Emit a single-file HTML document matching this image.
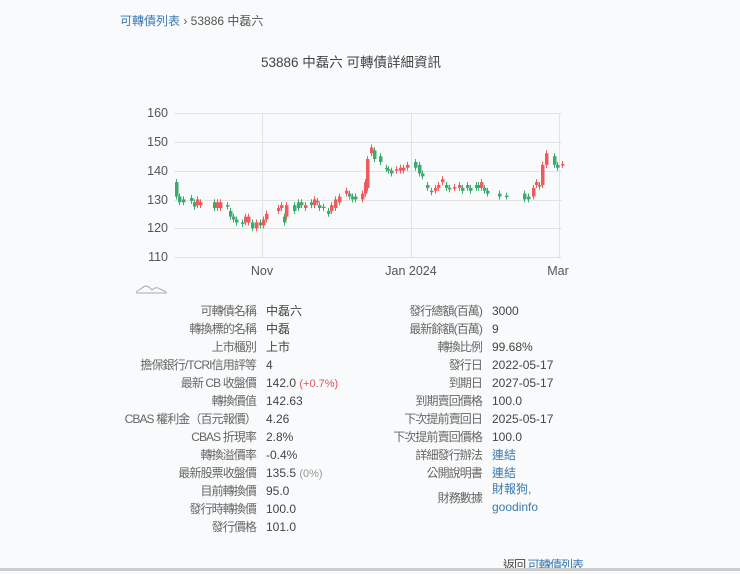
<!DOCTYPE html>
<html><head><meta charset="utf-8">
<style>
body{margin:0;width:740px;height:571px;background:#f9fafb;font-family:"Liberation Sans","Noto Sans CJK TC",sans-serif;color:#444;position:relative;overflow:hidden}
.a{color:#3a7ab0;text-decoration:none}
.bc{position:absolute;left:120px;top:12px;font-size:12px;color:#555}
.title{position:absolute;left:0;width:702px;text-align:center;top:51px;font-size:13.5px;color:#444}
.row{position:absolute;font-size:12px;height:18px;line-height:18px;white-space:nowrap}
.l{color:#666;text-align:right;letter-spacing:-0.9px}
.bar{position:absolute;left:0;right:0;bottom:0;height:3px;background:#ccc}
</style></head><body>
<div class="bc"><span class="a">可轉債列表</span> › 53886 中磊六</div>
<div class="title">53886 中磊六 可轉債詳細資訊</div>
<svg id="ch" width="740" height="300" style="position:absolute;left:0;top:0" font-family="Liberation Sans" font-size="12.5" fill="#555">
<g stroke="#e2e2e2" stroke-width="1">
<line x1="174" x2="562" y1="113.5" y2="113.5"/><line x1="174" x2="562" y1="142.5" y2="142.5"/>
<line x1="174" x2="562" y1="171.5" y2="171.5"/><line x1="174" x2="562" y1="200.5" y2="200.5"/>
<line x1="174" x2="562" y1="228.5" y2="228.5"/><line x1="174" x2="562" y1="257.5" y2="257.5"/>
<line x1="262.5" x2="262.5" y1="113" y2="258"/><line x1="411.5" x2="411.5" y1="113" y2="258"/><line x1="559.5" x2="559.5" y1="113" y2="258"/>
</g>
<text x="168" y="117" text-anchor="end">160</text><text x="168" y="146" text-anchor="end">150</text>
<text x="168" y="175" text-anchor="end">140</text><text x="168" y="204" text-anchor="end">130</text>
<text x="168" y="232" text-anchor="end">120</text><text x="168" y="261" text-anchor="end">110</text>
<text x="262" y="275" text-anchor="middle">Nov</text><text x="411" y="275" text-anchor="middle">Jan 2024</text><text x="558" y="275" text-anchor="middle">Mar</text>
<path d="M136 292 L142 288 Q146 284 150 288 L152 290 Q156 286 160 289 L166 292 M136 293 L167 293" stroke="#aaa" fill="none" stroke-width="1"/>
<g id="c"></g>
</svg>
<script>
var d=[[175,136,131,'g'],[178,131,129,'g'],[182,130,129,'g'],[190,130.5,129.5,'g'],[193,129,127.5,'g'],[196,128,130,'r'],[199,128,129,'r'],[213,129,127,'g'],[216,127,129,'r'],[219,127,129,'r'],[226,128,127.5,'g'],[229,126,124,'g'],[232,124,123,'g'],[235,123,122,'g'],[241,122,121.5,'g'],[244,122,124,'r'],[247,122,124,'r'],[251,122,120,'g'],[255,120,122,'r'],[259,122,121,'g'],[262,121,123,'r'],[265,123,125,'r'],[277,126,127,'r'],[280,127,128,'r'],[283,124,122,'g'],[285,124,128,'r'],[293,128,126,'g'],[297,129,127,'g'],[300,129,128,'g'],[304,127,128,'r'],[310,128,129,'g'],[313,128,130,'r'],[316,129,129.5,'r'],[318,128,127,'g'],[322,127,127.5,'g'],[327,126,125,'g'],[330,126,128,'r'],[334,127,130,'r'],[338,129,131,'r'],[345,132,133,'r'],[348,132,131,'g'],[351,131,130,'g'],[354,131,130,'g'],[361,130,132,'r'],[364,132,136,'r'],[366,134,144,'r'],[370,146,148,'r'],[373,147,144,'g'],[379,145,143,'g'],[385,141,140.5,'g'],[387,140.5,140,'g'],[390,139,140,'g'],[395,140,140.5,'r'],[399,140,141,'r'],[402,140,141,'r'],[406,141,142,'r'],[414,143,141,'g'],[418,142,139,'g'],[421,139,138,'g'],[426,135,134,'g'],[430,133,132.5,'g'],[434,133,134,'r'],[437,134,135,'r'],[441,136,137,'r'],[445,135,134,'g'],[448,134,133.5,'g'],[453,134,134.3,'r'],[458,134,135,'r'],[461,134,133,'g'],[466,134,135,'g'],[469,134,133,'g'],[475,135,134,'g'],[477,135,134,'g'],[480,134,136,'r'],[483,134,133,'g'],[486,133,132,'g'],[498,132,131,'g'],[505,131,131.3,'g'],[523,132,130,'g'],[527,131,130,'g'],[532,131,134,'r'],[535,135,136,'r'],[538,135,134.5,'g'],[541,135,142,'r'],[545,142,146,'r'],[553,145,142,'g'],[556,142,141,'g'],[561,142,142.3,'r']];
function Y(p){return 113+(160-p)*2.88}
var s='';d.forEach(function(c){var a=Math.max(c[1],c[2]),b=Math.min(c[1],c[2]);var col=c[3]=='g'?'#3aaa6e':'#ef5a5a';
var y1=Y(a),y2=Y(b);s+='<line x1="'+(c[0]+1.5)+'" x2="'+(c[0]+1.5)+'" y1="'+(y1-3)+'" y2="'+(y2+3)+'" stroke="'+col+'" stroke-width="1"/>';
s+='<rect x="'+c[0]+'" y="'+y1+'" width="3.5" height="'+Math.max(1.5,y2-y1)+'" fill="'+col+'"/>';});
document.getElementById('c').innerHTML=s;
</script>
<div id="t"></div>
<script>
var L=[["可轉債名稱","中磊六"],["轉換標的名稱","中磊"],["上市櫃別","上市"],["擔保銀行/TCRI信用評等","4"],["最新 CB 收盤價",' 142.0 <span style="color:#e05555;font-size:11px">(+0.7%)</span>'],["轉換價值","142.63"],["CBAS 權利金（百元報價）","4.26"],["CBAS 折現率","2.8%"],["轉換溢價率","-0.4%"],["最新股票收盤價",' 135.5 <span style="color:#999;font-size:11px">(0%)</span>'],["目前轉換價","95.0"],["發行時轉換價","100.0"],["發行價格","101.0"]];
var R=[["發行總額(百萬)","3000"],["最新餘額(百萬)","9"],["轉換比例","99.68%"],["發行日","2022-05-17"],["到期日","2027-05-17"],["到期賣回價格","100.0"],["下次提前賣回日","2025-05-17"],["下次提前賣回價格","100.0"],["詳細發行辦法",'<span class="a">連結</span>'],["公開說明書",'<span class="a">連結</span>']];
var h='';L.forEach(function(r,i){var y=302+i*18;h+='<div class="row l" style="left:40px;width:216px;top:'+y+'px">'+r[0]+'</div><div class="row" style="left:266px;top:'+y+'px">'+r[1]+'</div>';});
R.forEach(function(r,i){var y=302+i*18;h+='<div class="row l" style="left:300px;width:182px;top:'+y+'px">'+r[0]+'</div><div class="row" style="left:492px;top:'+y+'px">'+r[1]+'</div>';});
h+='<div class="row l" style="left:300px;width:182px;top:489px">財務數據</div><div class="row a" style="left:492px;top:480px">財報狗,</div><div class="row a" style="left:492px;top:498px">goodinfo</div>';
h+='<div class="row" style="left:503px;top:556px;letter-spacing:-0.9px">返回 <span class="a">可轉債列表</span></div>';
document.getElementById('t').innerHTML=h;
</script>
<div class="bar"></div>
</body></html>
